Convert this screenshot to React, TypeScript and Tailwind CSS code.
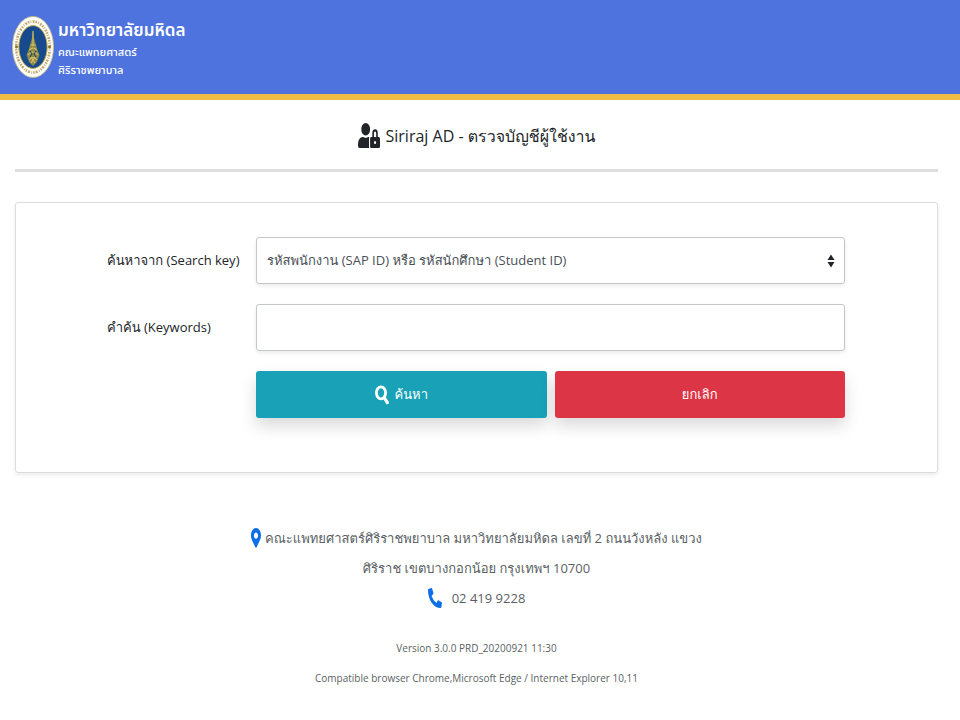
import { FaUserLock, FaMapMarkerAlt, FaPhoneAlt } from "react-icons/fa";

function Seal() {
  return (
    <svg viewBox="0 0 42 62" className="h-[62px] w-[42px] shrink-0" preserveAspectRatio="none" aria-hidden="true">
      <ellipse cx="21" cy="31" rx="20.5" ry="30.5" fill="#fdfdf8" stroke="#c9bb85" strokeWidth="0.8" />
      <ellipse cx="21" cy="31" rx="16.8" ry="25.5" fill="none" stroke="#a8852f" strokeWidth="2.6" strokeDasharray="1.5 1.2 0.8 1.4 2 1" opacity="0.7" />
      <ellipse cx="21" cy="31" rx="14.2" ry="21.5" fill="#164a8c" stroke="#c9ab4d" strokeWidth="1" />
      <path d="M21 14 L22 22 L24 29 L25.500 34 L27.500 39 L25 46 L21 50 L17 46 L14.500 39 L16.500 34 L18 29 L20 22 Z" fill="#8d8a45" />
      <path d="M21 15 V30 M18.500 29 H23.500 M17.500 34 Q21 30 24.500 34 M16 39 Q21 33 26 39 M17 44 Q21 39 25 44 M19 47 L23 41 M23 47 L19 41" stroke="#d8c26a" strokeWidth="1.100" fill="none" />
      <path d="M18 35 L20 38 L18 41 M24 35 L22 38 L24 41" stroke="#163e70" strokeWidth="1" fill="none" />
      <circle cx="4.500" cy="31" r="1.400" fill="#8d6d28" />
      <circle cx="37.500" cy="31" r="1.400" fill="#8d6d28" />
    </svg>
  );
}

function SearchIcon() {
  return (
    <svg viewBox="0 0 14 20" className="h-5 w-3.5" fill="none" stroke="currentColor" aria-hidden="true">
      <ellipse cx="6" cy="7.8" rx="4.6" ry="6" strokeWidth="2.8" />
      <path d="M9.500 13 L12.300 17.600" strokeWidth="3.2" strokeLinecap="round" />
    </svg>
  );
}

export default function App() {
  return (
    <div className="min-h-screen bg-white font-['Open_Sans','Loma','Noto_Sans_Thai_Looped',sans-serif] text-[#212529]">
      <header className="flex h-[100px] items-start gap-1 border-b-6 border-[#f0bd44] bg-[#4e73df] pt-4 pl-3 font-['Open_Sans','Noto_Sans_Thai',sans-serif] text-white">
        <Seal />
        <div>
          <p className="text-[17px] leading-7 font-semibold">มหาวิทยาลัยมหิดล</p>
          <p className="text-[11px] leading-4 font-medium">คณะแพทยศาสตร์</p>
          <p className="text-[11px] leading-5 font-medium">ศิริราชพยาบาล</p>
        </div>
      </header>

      <main className="pr-[22px] pl-[15px]">
        <h1 className="flex h-[72px] items-center justify-center gap-1.5 border-b-3 border-[#dedede] pt-0.5 text-base font-medium">
          <FaUserLock className="h-[25px] w-[22px]" preserveAspectRatio="none" aria-hidden="true" />
          Siriraj AD - ตรวจบัญชีผู้ใช้งาน
        </h1>

        <form
          className="mt-[30px] rounded-[3px] border border-[#dcdcdc] pt-[34px] pr-[92px] pb-[54px] pl-[91px] shadow-[0_2px_4px_rgba(0,0,0,0.08)]"
          onSubmit={(e) => e.preventDefault()}
        >
          <div className="grid grid-cols-[149px_1fr] items-center gap-y-5 text-[13px]">
            <label htmlFor="key">ค้นหาจาก (Search key)</label>
            <div className="relative">
              <select
                id="key"
                className="block h-[47px] w-full appearance-none rounded-[3px] border border-[#c4c7ca] bg-white px-2.5 text-[#495057] shadow-[0_2px_4px_rgba(0,0,0,0.08)]"
              >
                <option>รหัสพนักงาน (SAP ID) หรือ รหัสนักศึกษา (Student ID)</option>
              </select>
              <svg
                viewBox="0 0 8 14"
                className="pointer-events-none absolute top-1/2 right-2.5 h-3.5 w-2 -translate-y-1/2"
                aria-hidden="true"
              >
                <path d="M4 0.500 L7.500 6 H0.500 Z M4 13.500 L0.500 8 H7.500 Z" fill="#212529" />
              </svg>
            </div>
            <label htmlFor="keywords">คำค้น (Keywords)</label>
            <input
              id="keywords"
              type="text"
              className="h-[47px] w-full rounded-[3px] border border-[#c4c7ca] bg-white px-2.5 text-[#495057] shadow-[0_2px_4px_rgba(0,0,0,0.08)]"
            />
            <div className="col-start-2 grid grid-cols-2 gap-2 text-white">
              <button
                type="submit"
                className="flex h-[47px] items-center justify-center gap-1.5 rounded-[3px] bg-[#18a1b7] shadow-[0_8px_16px_rgba(0,0,0,0.15)]"
              >
                <SearchIcon />
                ค้นหา
              </button>
              <button type="reset" className="h-[47px] rounded-[3px] bg-[#dc3545] shadow-[0_8px_16px_rgba(0,0,0,0.15)]">
                ยกเลิก
              </button>
            </div>
          </div>
        </form>

        <footer className="mt-[50px] text-center text-[#5a5f64]">
          <address className="text-[13px] leading-[30px] not-italic">
            <p className="flex items-center justify-center gap-1">
              <FaMapMarkerAlt className="h-5 w-2.5 text-[#0d6fe8]" preserveAspectRatio="none" aria-hidden="true" />
              คณะแพทยศาสตร์ศิริราชพยาบาล มหาวิทยาลัยมหิดล เลขที่ 2 ถนนวังหลัง แขวง
            </p>
            <p>ศิริราช เขตบางกอกน้อย กรุงเทพฯ 10700</p>
            <p className="flex items-center justify-center gap-2.5">
              <FaPhoneAlt className="h-5 w-3.5 text-[#0d6fe8]" preserveAspectRatio="none" aria-hidden="true" />
              02 419 9228
            </p>
          </address>
          <div className="mt-5 text-[10px] leading-[30px]">
            <p>Version 3.0.0 PRD_20200921 11:30</p>
            <p>Compatible browser Chrome,Microsoft Edge / Internet Explorer 10,11</p>
          </div>
        </footer>
      </main>
    </div>
  );
}
